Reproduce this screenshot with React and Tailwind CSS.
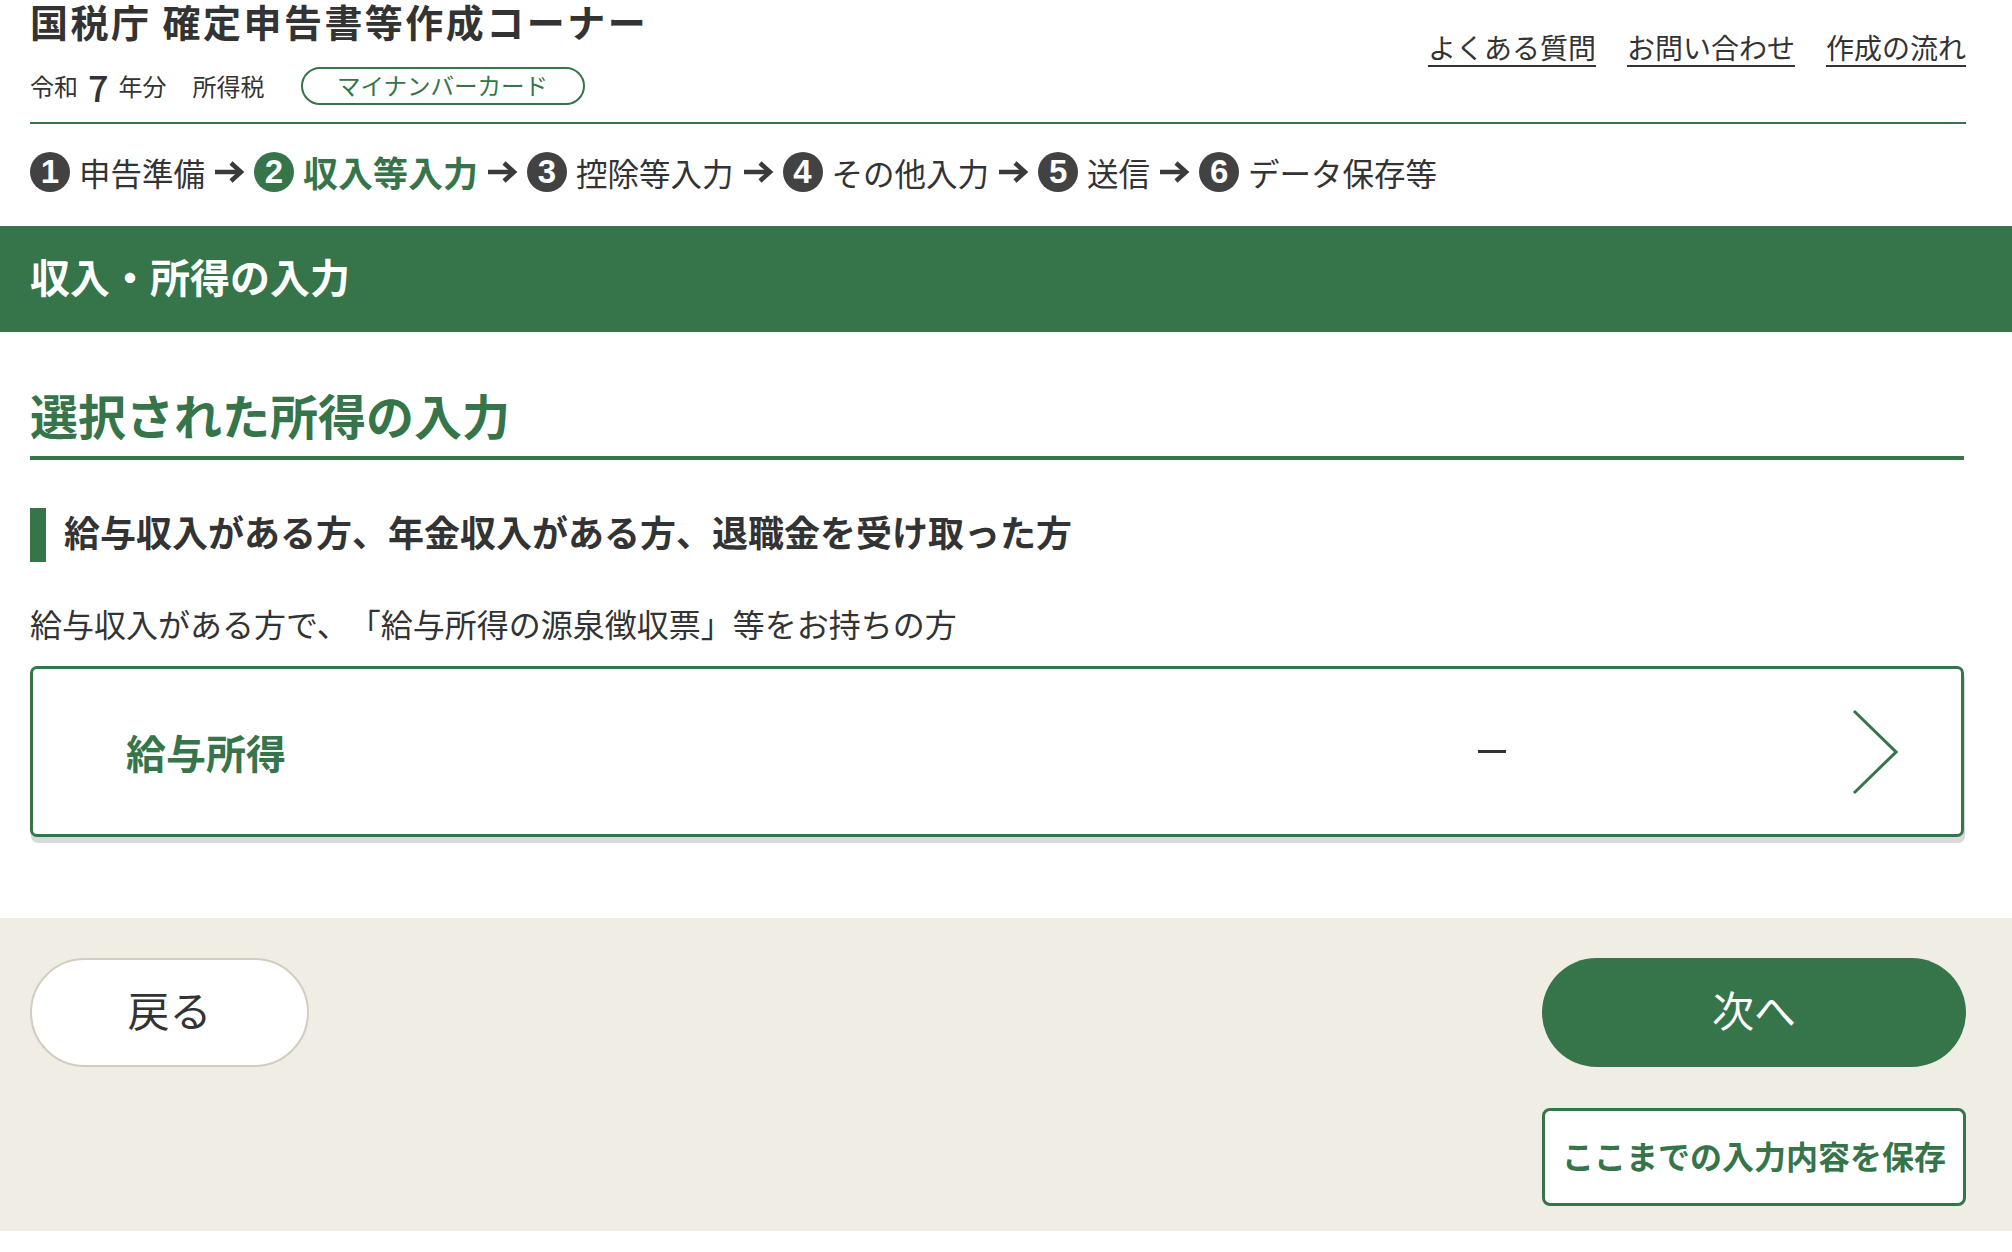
const green = "#36744a";

function Arrow() {
  return (
    <svg width="31" height="24" viewBox="0 0 31 24" className="shrink-0">
      <path d="M1 12 H27" stroke="#3a3a3a" strokeWidth="4.5" fill="none" />
      <path d="M17 3 L27 12 L17 21" stroke="#3a3a3a" strokeWidth="4.5" fill="none" strokeLinejoin="miter" />
    </svg>
  );
}

function Step({ n, label, active }) {
  return (
    <div className="flex items-center gap-[9px]">
      <span
        className={
          active
            ? "flex h-[40px] w-[40px] shrink-0 items-center justify-center rounded-full bg-[#36744a] pb-[2px] font-['Liberation_Sans',sans-serif] text-[33px] font-bold leading-none text-white"
            : "flex h-[40px] w-[40px] shrink-0 items-center justify-center rounded-full bg-[#424242] pb-[2px] font-['Liberation_Sans',sans-serif] text-[33px] font-bold leading-none text-white"
        }
      >
        {n}
      </span>
      <span
        className={
          active
            ? "text-[35px] font-bold leading-[40px] text-[#36744a]"
            : "text-[31.5px] leading-[40px] text-[#333]"
        }
      >
        {label}
      </span>
    </div>
  );
}

const steps = [
  ["1", "申告準備"],
  ["2", "収入等入力"],
  ["3", "控除等入力"],
  ["4", "その他入力"],
  ["5", "送信"],
  ["6", "データ保存等"],
];

export default function App() {
  return (
    <div className="min-h-screen bg-white font-['Noto_Sans_CJK_JP',sans-serif] text-[#333]">
      {/* header */}
      <header className="pl-[30px] pr-[46px]">
        <div className="flex justify-between border-b-2 border-[#36744a] pb-[17px]">
          <div>
            <h1 className="pt-[2px] text-[38px] font-bold leading-[38px] tracking-[0.065em] text-[#333]">
              国税庁 確定申告書等作成コーナー
            </h1>
            <div className="mt-[27px] flex h-[38px] items-center">
              <span className="text-[24px] leading-none">令和</span>
              <span className="mx-[10px] text-[36px] font-medium leading-none">7</span>
              <span className="text-[24px] leading-none">年分</span>
              <span className="ml-[26px] text-[24px] leading-none">所得税</span>
              <span className="ml-[36px] flex h-[38px] w-[284px] items-center justify-center rounded-full border-2 border-[#36744a] text-[23.5px] leading-none text-[#36744a]">
                マイナンバーカード
              </span>
            </div>
          </div>
          <nav className="flex gap-[31px] pt-[29px] text-[28px] leading-[36px]">
            <a className="underline decoration-2 underline-offset-[6px]">よくある質問</a>
            <a className="underline decoration-2 underline-offset-[6px]">お問い合わせ</a>
            <a className="underline decoration-2 underline-offset-[6px]">作成の流れ</a>
          </nav>
        </div>

        {/* steps */}
        <div className="mt-[28px] flex items-center gap-[9px]">
          {steps.map(([n, label], i) => (
            <div key={n} className="flex items-center gap-[9px]">
              {i > 0 && <Arrow />}
              <Step n={n} label={label} active={i === 1} />
            </div>
          ))}
        </div>
      </header>

      {/* page title band */}
      <div className="mt-[34px] flex h-[106px] items-center bg-[#36744a] pb-[7px] pl-[30px]">
        <h2 className="text-[40px] font-bold leading-none text-white">収入・所得の入力</h2>
      </div>

      <main className="pl-[30px] pr-[48px]">
        <h3 className="mt-[54px] border-b-4 border-[#36744a] pb-[14px] text-[48px] font-bold leading-[56px] text-[#36744a]">
          選択された所得の入力
        </h3>

        <div className="mt-[48px] flex items-center gap-[18px]">
          <span className="h-[54px] w-[16px] bg-[#36744a]" />
          <h4 className="pb-[7px] text-[36px] font-bold leading-[47px] text-[#333]">
            給与収入がある方、年金収入がある方、退職金を受け取った方
          </h4>
        </div>

        <p className="mt-[39px] text-[32px] leading-[44px] [text-spacing-trim:space-all]">
          給与収入がある方で、「給与所得の源泉徴収票」等をお持ちの方
        </p>

        <button className="mt-[21px] flex h-[171px] w-full items-center rounded-[7px] border-[3px] border-[#36744a] bg-white pl-[93px] pr-[63px] text-left shadow-[1px_6px_0_#d9d9d9]">
          <span className="flex-1 text-[40px] font-bold leading-none text-[#36744a]">給与所得</span>
          <span className="mr-[346px] block h-[3px] w-[28px] bg-[#333]" aria-label="－" />
          <svg width="46" height="86" viewBox="0 0 46 86" fill="none">
            <path d="M2 2 L44 43 L2 84" stroke={green} strokeWidth="3" />
          </svg>
        </button>
      </main>

      {/* footer actions */}
      <footer className="mt-[81px] flex justify-between bg-[#f0ede5] pb-[25px] pl-[30px] pr-[46px] pt-[40px]">
        <button className="h-[109px] w-[279px] rounded-full border-2 border-[#d2cdc1] bg-white pb-[7px] text-[42px] leading-none text-[#333]">
          戻る
        </button>
        <div className="flex flex-col gap-[41px]">
          <button className="h-[109px] w-[424px] rounded-full bg-[#36744a] pb-[7px] text-[42px] leading-none text-white">
            次へ
          </button>
          <button className="h-[98px] w-[424px] rounded-[8px] border-[3px] border-[#36744a] bg-white pb-[4px] text-[32px] font-bold leading-none text-[#36744a]">
            ここまでの入力内容を保存
          </button>
        </div>
      </footer>
    </div>
  );
}
